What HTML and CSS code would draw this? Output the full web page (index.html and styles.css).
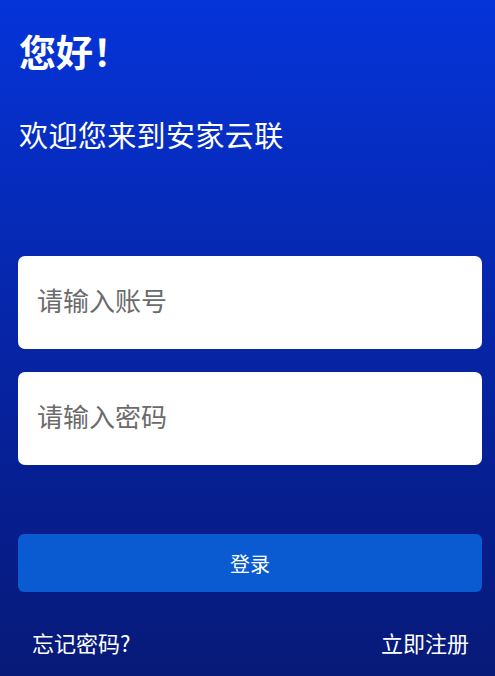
FILE: index.html
```html
<!DOCTYPE html>
<html lang="zh-CN">
<head>
<meta charset="utf-8">
<title>登录</title>
<link rel="stylesheet" href="styles.css">
</head>
<body>
<div class="page">
  <h1 class="hello">您好！</h1>
  <p class="welcome">欢迎您来到安家云联</p>
  <div class="fields">
    <div class="field"><span class="ph">请输入账号</span></div>
    <div class="field"><span class="ph">请输入密码</span></div>
  </div>
  <div class="btn">登录</div>
  <div class="links">
    <span class="link">忘记密码?</span>
    <span class="link">立即注册</span>
  </div>
</div>
</body>
</html>
```
FILE: styles.css
```css
html, body {
  margin: 0;
  padding: 0;
}
body {
  font-family: "Noto Sans CJK SC", "Noto Sans", sans-serif;
  color: #fff;
}
.page {
  width: 495px;
  height: 676px;
  box-sizing: border-box;
  padding: 0 13px 0 18px;
  background: linear-gradient(180deg, #0534d9 0%, #0628b0 40%, #061f93 70%, #071a78 100%);
  overflow: hidden;
  display: flex;
  flex-direction: column;
}
.hello {
  margin: 24px 0 0 1px;
  font-size: 37px;
  line-height: 54px;
  font-weight: 700;
}
.welcome {
  margin: 36px 0 0 1px;
  font-size: 29px;
  line-height: 40px;
  font-weight: 400;
  letter-spacing: 0.4px;
}
.fields {
  margin-top: 102px;
  display: flex;
  flex-direction: column;
  gap: 23px;
}
.field {
  height: 93px;
  background: #fff;
  border-radius: 7px;
  display: flex;
  align-items: center;
  padding-left: 19px;
}
.ph {
  color: #6b6b6b;
  font-size: 26px;
  line-height: 30px;
  margin-top: -6px;
}
.btn {
  margin-top: 69px;
  height: 58px;
  background: #0a5bd2;
  border-radius: 6px;
  display: flex;
  align-items: center;
  justify-content: center;
  font-size: 20px;
}
.links {
  margin-top: 35px;
  display: flex;
  justify-content: space-between;
  padding: 0 13px 0 14px;
}
.link {
  font-size: 22px;
  line-height: 30px;
}
```
